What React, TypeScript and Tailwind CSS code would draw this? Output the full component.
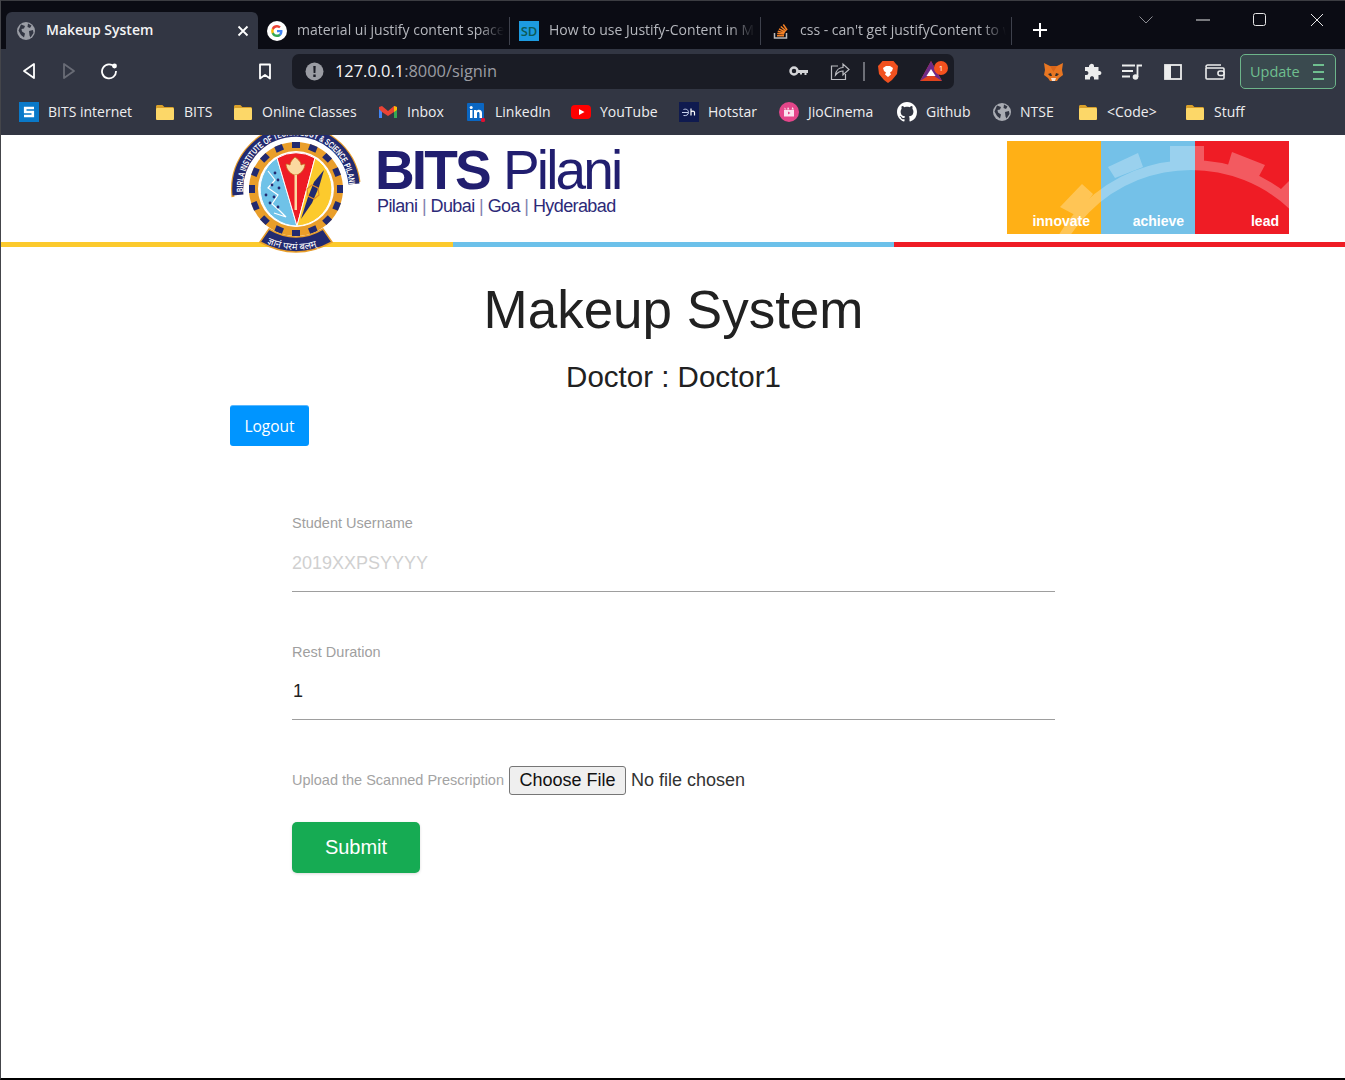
import React from "react";

const ui = "font-['Open_Sans','Noto_Sans',sans-serif]";

function Folder() {
  return (
    <svg width="20" height="20" viewBox="0 0 20 20" className="shrink-0">
      <path d="M1 4.500C1 3.700 1.600 3 2.400 3h5l2 2h8.200c.8 0 1.400.7 1.400 1.500v10c0 .8-.6 1.500-1.400 1.500H2.400C1.600 18 1 17.300 1 16.500z" fill="#d9a02a" />
      <path d="M1 7.500C1 6.700 1.600 6 2.400 6h15.200c.8 0 1.400.7 1.400 1.500v9c0 .8-.6 1.500-1.400 1.500H2.400C1.600 18 1 17.300 1 16.500z" fill="#fcd768" />
    </svg>
  );
}

function Globe({ size = 18, color = "#a9acb3", bg = "#323643" }: { size?: number; color?: string; bg?: string }) {
  return (
    <svg width={size} height={size} viewBox="0 0 18 18" className="shrink-0">
      <circle cx="9" cy="9" r="9" fill={color} />
      <path d="M4 2.500 8 4 7 6.500 4.500 7 5 9.500l3 2-1 4L4 13 1.500 8.500zM11 1.500l3.500 2L13 6l-2.500-1zM12 9l4-1 .5 3-3 4.500-1-2z" fill={bg} />
    </svg>
  );
}

const bookmarks: { label: string; w: string; icon: React.ReactNode }[] = [
  {
    label: "BITS internet",
    w: "w-[136px]",
    icon: (
      <svg width="20" height="20" viewBox="0 0 20 20" className="shrink-0">
        <rect width="20" height="20" fill="#0a79c9" />
        <path d="M15 6H6.200v4h7.600v4H5" fill="none" stroke="#fff" strokeWidth="2.600" />
      </svg>
    ),
  },
  { label: "BITS", w: "w-[78px]", icon: <Folder /> },
  { label: "Online Classes", w: "w-[145px]", icon: <Folder /> },
  {
    label: "Inbox",
    w: "w-[88px]",
    icon: (
      <svg width="20" height="20" viewBox="0 0 20 20" className="shrink-0">
        <path d="M1 5v11h3V8z" fill="#4285f4" />
        <path d="M19 5v11h-3V8z" fill="#34a853" />
        <path d="M1 5l3-1 6 5 6-5 3 1v2l-3 3-6 4-6-4-3-3z" fill="#ea4335" />
        <path d="M16 4l3 1v3l-3 2z" fill="#fbbc04" />
      </svg>
    ),
  },
  {
    label: "LinkedIn",
    w: "w-[105px]",
    icon: (
      <svg width="20" height="20" viewBox="0 0 20 20" className="shrink-0">
        <rect x="1" y="1" width="17" height="18" rx="1" fill="#0a66c2" />
        <rect x="4" y="8" width="2.500" height="8" fill="#fff" />
        <circle cx="5.200" cy="5.500" r="1.500" fill="#fff" />
        <path d="M8 8h2.500v1.200c.6-1 1.500-1.400 2.500-1.400 2 0 3 1.200 3 3.400V16h-2.500v-4.300c0-1-.4-1.600-1.300-1.600s-1.200.7-1.200 1.600V16H8z" fill="#fff" />
        <circle cx="17" cy="18" r="2.200" fill="#e0102f" />
      </svg>
    ),
  },
  {
    label: "YouTube",
    w: "w-[108px]",
    icon: (
      <svg width="20" height="20" viewBox="0 0 20 20" className="shrink-0">
        <rect y="3" width="20" height="14" rx="4" fill="#f00" />
        <path d="M8 7l5.500 3L8 13z" fill="#fff" />
      </svg>
    ),
  },
  {
    label: "Hotstar",
    w: "w-[100px]",
    icon: (
      <svg width="20" height="20" viewBox="0 0 20 20" className="shrink-0">
        <rect width="20" height="20" fill="#0f1a4f" />
        <path d="M3 10.500h6M4.500 7.500c3-1 5 .5 5 3s-2.500 3.500-5 3" stroke="#c8d2ee" strokeWidth="1" fill="none" />
        <path d="M12 6.500v7M12 10c.5-1 3.500-1.500 3.500.5v3" stroke="#fff" strokeWidth="1.200" fill="none" />
      </svg>
    ),
  },
  {
    label: "JioCinema",
    w: "w-[118px]",
    icon: (
      <svg width="20" height="20" viewBox="0 0 20 20" className="shrink-0">
        <circle cx="10" cy="10" r="10" fill="#e4468a" />
        <path d="M5 8h10v6.500H5z" fill="#fbe4ef" />
        <path d="M5.500 5.500l2 2h-2zM9 5l1.500 2.500H8zM13.500 5l1.500 2.500h-2.500z" fill="#fbe4ef" />
        <path d="M9 9.500l2.500 1.500L9 12.500z" fill="#e4468a" />
      </svg>
    ),
  },
  {
    label: "Github",
    w: "w-[96px]",
    icon: (
      <svg width="20" height="20" viewBox="0 0 16 16" className="shrink-0">
        <path fill="#fff" d="M8 0C3.580 0 0 3.580 0 8c0 3.540 2.290 6.530 5.470 7.590.4.070.55-.17.55-.38 0-.19-.01-.82-.01-1.490-2.010.37-2.530-.49-2.690-.94-.09-.23-.48-.94-.82-1.130-.28-.15-.68-.52-.01-.53.63-.01 1.080.58 1.230.82.720 1.210 1.870.87 2.330.66.070-.52.280-.87.510-1.070-1.780-.2-3.640-.89-3.640-3.950 0-.87.310-1.590.820-2.150-.08-.2-.36-1.020.08-2.120 0 0 .67-.21 2.200.82.640-.18 1.320-.27 2-.27s1.360.09 2 .27c1.530-1.040 2.200-.82 2.200-.82.440 1.100.16 1.920.08 2.120.51.560.82 1.270.82 2.150 0 3.070-1.870 3.750-3.650 3.950.29.250.54.730.54 1.480 0 1.070-.01 1.930-.01 2.200 0 .21.150.46.55.38A8.010 8.010 0 0 0 16 8c0-4.420-3.580-8-8-8z" />
      </svg>
    ),
  },
  { label: "NTSE", w: "w-[85px]", icon: <Globe /> },
  { label: "<Code>", w: "w-[107px]", icon: <Folder /> },
  { label: "Stuff", w: "w-[70px]", icon: <Folder /> },
];

function Tab({ icon, text, wide }: { icon: React.ReactNode; text: string; wide?: boolean }) {
  return (
    <div className={`${wide ? "w-[252px]" : "w-[251px]"} h-[37px] flex items-center pl-[9px]`}>
      <span className="w-[20px] h-[20px] shrink-0 flex items-center justify-center">{icon}</span>
      <span className="ml-[10px] mb-[2px] flex-1 overflow-hidden whitespace-nowrap text-[14px] text-[#b5b7bd] [mask-image:linear-gradient(to_right,black_88%,transparent)]">
        {text}
      </span>
      <span className="w-px h-[28px] bg-[#3e414c] ml-[5px] shrink-0" />
    </div>
  );
}

function Emblem() {
  const teeth = Array.from({ length: 16 }, (_, i) => (i * 360) / 16);
  return (
    <svg width="136" height="120" viewBox="0 0 136 120" className="absolute left-[227px] top-0 z-10">
      <defs>
        <path id="emblemArc" d="M15 57 A53 53 0 0 1 121 50" />
        <path id="ribbonArc" d="M38 108 Q68 122 98 108" />
      </defs>
      <path d="M5 62A63 63 0 0 1 131 47" fill="none" stroke="#e99e2a" strokeWidth="3" />
      <path d="M10 60A58 58 0 0 1 126 49" fill="none" stroke="#222a70" strokeWidth="11" />
      <circle cx="68" cy="54" r="47" fill="#e99e2a" />
      <g fill="#222a70">
        {teeth.map((a) => (
          <rect key={a} x="64" y="7" width="8" height="6" transform={`rotate(${a} 68 54)`} />
        ))}
      </g>
      <circle cx="68" cy="54" r="38" fill="#fff" />
      <path d="M49 23A37 37 0 0 0 69 91Z" fill="#6fc2e8" stroke="#fff" strokeWidth="1" />
      <path d="M49 23A37 37 0 0 1 87 23L69 91Z" fill="#ee1c25" stroke="#fff" strokeWidth="1" />
      <path d="M87 23A37 37 0 0 1 69 91Z" fill="#fcca2d" stroke="#fff" strokeWidth="1" />
      <path d="M67 22c-3 3-5 5-5 8-2-1-3-1-4-1 0 4 3 9 8 11h3c5-2 8-7 8-11-1 0-2 0-4 1 0-3-2-5-6-8z" fill="#fbd9a0" stroke="#c7631d" strokeWidth="0.800" />
      <rect x="66.500" y="40" width="2.500" height="35" fill="#fbd9a0" />
      <path d="M96 35 91 52 84 68 73 84 80 62 86 47z" fill="#222a70" />
      <path d="M84 50l6 3 1 7-5 4-6-3-1-7z" fill="none" stroke="#e08a2a" strokeWidth="1.200" />
      <path d="M40 36l7 9-7 8 10 7-6 9 8 7 6 6-12-4" stroke="#fff" strokeWidth="1.200" fill="none" />
      <g fill="#222a70">
        <circle cx="47" cy="38" r="1.400" /><circle cx="50" cy="45" r="1.400" /><circle cx="44" cy="50" r="1.400" /><circle cx="51" cy="53" r="1.400" /><circle cx="38" cy="60" r="1.400" /><circle cx="46" cy="62" r="1.400" /><circle cx="42" cy="68" r="1.400" /><circle cx="50" cy="72" r="1.400" />
      </g>
      <path d="M32 107 41 94Q68 110 95 94L104 107Q68 127 32 107z" fill="#222a70" stroke="#e99e2a" strokeWidth="1.500" />
      <text fontSize="9" fontWeight="700" fill="#fff" fontFamily="'Liberation Sans',sans-serif">
        <textPath href="#emblemArc" textLength="166" lengthAdjust="spacingAndGlyphs">BIRLA INSTITUTE OF TECHNOLOGY &amp; SCIENCE PILANI</textPath>
      </text>
      <text fontSize="9.500" fill="#fff" fontFamily="'Noto Sans',sans-serif">
        <textPath href="#ribbonArc" startOffset="1">ज्ञानं परमं बलम्</textPath>
      </text>
    </svg>
  );
}

function Banner() {
  return (
    <div className="relative w-[282px] h-[93px] flex overflow-hidden font-['Liberation_Sans',sans-serif] font-bold text-[14px] text-white">
      <div className="w-[94px] bg-[#ffb016] flex items-end justify-end pr-[11px] pb-[2px]">
        <span className="relative z-20">innovate</span>
      </div>
      <div className="w-[94px] bg-[#74c1e8] flex items-end justify-end pr-[11px] pb-[2px]">
        <span className="relative z-20">achieve</span>
      </div>
      <div className="flex-1 bg-[#ef1c25] flex items-end justify-end pr-[10px] pb-[2px]">
        <span className="relative z-20">lead</span>
      </div>
      <svg width="282" height="93" viewBox="0 0 282 93" className="absolute inset-0 z-10 pointer-events-none">
        <g opacity="0.27">
          <circle cx="184" cy="173" r="149" fill="none" stroke="#fff" strokeWidth="10" />
          <g fill="#fff">
            <path d="M53 66 75 43 86 53 70 75z" />
            <path d="M101 26 131 12 136 26 108 37z" />
            <path d="M163 5h34v16h-34z" />
            <path d="M225 11 258 24 251 37 221 24z" />
            <path d="M273 49 283 39V62z" />
          </g>
        </g>
      </svg>
    </div>
  );
}

export default function App() {
  return (
    <div className="w-[1345px] h-[1080px] overflow-hidden bg-white border-l border-l-[#44454a] border-b-2 border-b-black flex flex-col">
      {/* Browser chrome */}
      <div className={`${ui} bg-[#0b0c14] border-t border-[#3c3d42] h-[49px] shrink-0 flex items-end relative pl-[5px]`}>
        <div className="w-[252px] h-[37px] bg-[#323643] rounded-t-[6px] flex items-center pl-[11px] pr-[9px]">
          <Globe size={18} color="#9a9da5" />
          <span className="ml-[11px] mb-[2px] flex-1 text-[14px] font-semibold text-[#f4f4f5] whitespace-nowrap">Makeup System</span>
          <svg width="12" height="12" viewBox="0 0 12 12"><path d="M1.500 1.500l9 9m0-9-9 9" stroke="#fff" strokeWidth="1.800" /></svg>
        </div>
        <Tab
          wide
          text="material ui justify content space between"
          icon={
            <svg width="20" height="20" viewBox="0 0 20 20">
              <circle cx="10" cy="10" r="10" fill="#fff" />
              <path d="M15.500 10.200c0-.4 0-.8-.1-1.200H10v2.300h3.100a2.700 2.700 0 0 1-1.200 1.700v1.500h1.900c1.100-1 1.700-2.500 1.700-4.300z" fill="#4285f4" />
              <path d="M10 16c1.600 0 2.900-.5 3.800-1.500l-1.900-1.500c-.5.400-1.200.6-1.900.6-1.500 0-2.800-1-3.200-2.400h-2v1.500A5.700 5.700 0 0 0 10 16z" fill="#34a853" />
              <path d="M6.800 11.200a3.500 3.500 0 0 1 0-2.400V7.300h-2a5.900 5.900 0 0 0 0 5.400z" fill="#fbbc05" />
              <path d="M10 6.400c.8 0 1.600.3 2.200.9l1.600-1.700A5.600 5.600 0 0 0 10 4a5.700 5.700 0 0 0-5.200 3.300l2 1.500C7.200 7.400 8.500 6.400 10 6.400z" fill="#ea4335" />
            </svg>
          }
        />
        <Tab
          text="How to use Justify-Content in Material UI"
          icon={
            <span className="w-[20px] h-[20px] bg-[#1d9be0] text-[#0c5a56] text-[13px] leading-[20px] text-center font-semibold">SD</span>
          }
        />
        <Tab
          text="css - can't get justifyContent to work in MUI"
          icon={
            <svg width="20" height="20" viewBox="0 0 20 20">
              <path d="M3.500 12v5h12v-5" stroke="#bcbbbb" strokeWidth="1.500" fill="none" transform="translate(1 0)" />
              <path d="M7 14.800h7M7.200 12.500l7 .6M7.800 10.200l6.800 1.800M9 7.800l6.200 3.200M10.800 5.500l5.300 4.500M13.300 3.500l3.800 5.500" stroke="#f48024" strokeWidth="1.500" fill="none" />
            </svg>
          }
        />
        <svg width="16" height="16" viewBox="0 0 16 16" className="ml-[20px] mb-[11px]"><path d="M8 1v14M1 8h14" stroke="#fff" strokeWidth="2" /></svg>
        <div className="absolute right-0 top-0 h-[37px] flex items-center">
          <svg width="16" height="10" viewBox="0 0 16 10" className="mr-[42px]"><path d="M1.500 1.500 8 8l6.500-6.500" stroke="#8b8c92" fill="none" /></svg>
          <svg width="14" height="14" viewBox="0 0 14 14" className="mr-[43px]"><path d="M0 7h14" stroke="#e6e6e6" /></svg>
          <svg width="14" height="14" viewBox="0 0 14 14" className="mr-[43px]"><rect x=".5" y=".5" width="12" height="12" rx="2" stroke="#e6e6e6" fill="none" /></svg>
          <svg width="14" height="14" viewBox="0 0 14 14" className="mr-[21px]"><path d="M1 1l12 12M13 1 1 13" stroke="#e6e6e6" /></svg>
        </div>
      </div>

      <div className={`${ui} bg-[#323643] h-[43px] shrink-0 flex items-center relative pl-[20px] pt-[1px]`}>
        <svg width="16" height="18" viewBox="0 0 16 18" className="mr-[24px]"><path d="M13 2v14L3 9z" stroke="#fff" strokeWidth="1.800" fill="none" strokeLinejoin="round" /></svg>
        <svg width="16" height="18" viewBox="0 0 16 18" className="mr-[23px]"><path d="M3 2v14l10-7z" stroke="#696c76" strokeWidth="1.800" fill="none" strokeLinejoin="round" /></svg>
        <svg width="18" height="18" viewBox="0 0 18 18" className="mr-[140px]">
          <path d="M14.600 5.200A7 7 0 1 0 16 9" stroke="#fff" strokeWidth="1.800" fill="none" />
          <circle cx="14.500" cy="4" r="2.400" fill="#fff" />
        </svg>
        <svg width="14" height="17" viewBox="0 0 14 17" className="mr-[20px]"><path d="M2 1.500h10v14l-5-3.500-5 3.500z" stroke="#fff" strokeWidth="1.800" fill="none" strokeLinejoin="round" /></svg>
        <div className="w-[662px] h-[35px] bg-[#1a1c25] rounded-[7px] flex items-center pl-[13px]">
          <svg width="19" height="19" viewBox="0 0 19 19"><circle cx="9.500" cy="9.500" r="9" fill="#9a9ca3" /><path d="M8.300 4h2.400l-.3 7H8.600zM8.300 12.500h2.400V15H8.300z" fill="#1a1c25" /></svg>
          <span className="ml-[11px] text-[16.400px] text-[#f4f4f5] whitespace-nowrap">127.0.0.1<span className="text-[#9a9ca3]">:8000/signin</span></span>
          <div className="ml-auto flex items-center">
            <svg width="20" height="12" viewBox="0 0 20 12" className="mr-[21px]"><circle cx="5" cy="6" r="3.500" stroke="#d4d5d8" strokeWidth="2.500" fill="none" /><path d="M9 5h10v3h-1.500v2h-2V8H13v1.500h-2V8H9z" fill="#d4d5d8" /></svg>
            <svg width="20" height="19" viewBox="0 0 20 19" className="mr-[13px]"><path d="M8 4H1.500v13.500h14V12" stroke="#bcbdc2" strokeWidth="1.200" fill="none" /><path d="M5.500 13c.5-5 4-7.500 7.500-7.500V2l6 5.500-6 5.500V9c-3 0-5 1-7.500 4z" stroke="#bcbdc2" strokeWidth="1.200" fill="none" /></svg>
            <span className="w-[2px] h-[19px] bg-[#6d6f77] mr-[13px]" />
            <svg width="20" height="23" viewBox="0 0 20 23" className="mr-[22px]">
              <path d="M4.500 1h11L18 4l2 2-1 8-5 6-4 3-4-3-5-6-1-8 2-2z" fill="#f1511f" />
              <path d="M5 8l3-2h4l3 2-1 3-2 1.500 1 2-3 2.500-3-2.500 1-2L6 11z" fill="#fff" />
            </svg>
            <span className="relative w-[22px] h-[20px] mr-[12px]">
              <svg width="22" height="20" viewBox="0 0 24 20" preserveAspectRatio="none"><path d="M12 0 24 20H0z" fill="#e0431f" /><path d="M12 0 24 20 12 13 0 20z" fill="#6f2a86" /><path d="M12 8l5 7H7z" fill="#fff" /></svg>
              <span className="absolute right-[-6px] top-0 w-[14px] h-[14px] rounded-full bg-[#f4511e] text-white text-[8px] leading-[14px] text-center">1</span>
            </span>
          </div>
        </div>
        <div className="absolute left-[1042px] top-[1px] h-full flex items-center">
          <svg width="21" height="20" viewBox="0 0 21 20" className="mr-[20px]">
            <path d="M1 1l6 3h7l6-3-1 7 1 5-4 3-2 3H7l-2-3-4-3 1-5z" fill="#e87622" />
            <path d="M5 12l3-1 1 3H7zM16 12l-3-1-1 3h2z" fill="#33302e" />
            <path d="M8 16h5l-1 3H9z" fill="#f4e0d0" />
            <path d="M7 4h7l-3.500 6z" fill="#d9651a" />
          </svg>
          <svg width="18" height="18" viewBox="0 0 18 18" className="mr-[20px]"><path d="M6 1.500c1.500-1.500 4-.5 4 1.500v1h4.500v4h1c2.500 0 2.500 4 0 4h-1v4.500H10V15c0-2.500-4-2.500-4 0v1.500H1V12h1.500c2.500 0 2.500-4 0-4H1V4h4V3c0-.6.4-1.100 1-1.500z" fill="#eceded" /></svg>
          <svg width="20" height="16" viewBox="0 0 20 16" className="mr-[22px]"><path d="M0 1.500h13M0 7h11M0 12.500h8" stroke="#eceded" strokeWidth="1.800" /><path d="M15.500 13V1.500H20" stroke="#eceded" strokeWidth="1.800" fill="none" /><circle cx="13.500" cy="13" r="2.800" fill="#eceded" /></svg>
          <svg width="18" height="16" viewBox="0 0 18 16" className="mr-[23px]"><rect x="1" y="1" width="16" height="14" stroke="#eceded" strokeWidth="1.800" fill="none" /><rect x="1" y="1" width="6" height="14" fill="#eceded" /></svg>
          <svg width="20" height="16" viewBox="0 0 20 16" className="mr-[15px]"><path d="M1 4v10c0 .6.5 1 1 1h16c.6 0 1-.4 1-1V5c0-.6-.4-1-1-1H2c-.6 0-1-.5-1-1.300S1.500 1 2.500 1H16" stroke="#eceded" strokeWidth="1.600" fill="none" /><rect x="13" y="7" width="6" height="4.500" rx="2" stroke="#eceded" strokeWidth="1.600" fill="#323643" /></svg>
          <div className="w-[96px] h-[35px] border border-[#6db58a] rounded-[5px] bg-[#3a4a4f] flex items-center pl-[9px] pr-[11px] text-[14.500px] text-[#6fbf8f]">
            <span>Update</span>
            <span className="ml-auto flex flex-col gap-[5px]">
              <span className="block w-[11px] h-[2px] bg-[#6fbf8f]" />
              <span className="block w-[11px] h-[2px] bg-[#6fbf8f]" />
              <span className="block w-[11px] h-[2px] bg-[#6fbf8f]" />
            </span>
          </div>
        </div>
      </div>

      <div className={`${ui} bg-[#323643] h-[43px] shrink-0 flex items-center pl-[18px] pb-[4px] text-[14px] text-[#eeeef0]`}>
        {bookmarks.map((b) => (
          <div key={b.label} className={`${b.w} shrink-0 flex items-center gap-[9px] whitespace-nowrap`}>
            {b.icon}
            <span>{b.label}</span>
          </div>
        ))}
      </div>

      {/* Site header */}
      <div className="relative h-[112px] shrink-0 font-['Liberation_Sans',sans-serif]">
        <Emblem />
        <div className="h-[107px] flex items-start">
          <div className="ml-[374px] mt-[11px] text-[#211e6f]">
            <div className="text-[55px] leading-[49px] tracking-[-2.900px] whitespace-nowrap h-[49px] [word-spacing:2px]">
              <span className="font-bold">BITS</span> <span>Pilani</span>
            </div>
            <div className="text-[18px] leading-[22px] tracking-[-0.600px] whitespace-nowrap text-[#2d2a78]">
              <span className="pl-[2px]">Pilani</span>
              <span className="mx-[4.500px] text-[#8583b0]">|</span>Dubai<span className="mx-[4.500px] text-[#8583b0]">|</span>Goa<span className="mx-[4.500px] text-[#8583b0]">|</span>Hyderabad
            </div>
          </div>
          <div className="ml-auto mr-[56px] mt-[6px]">
            <Banner />
          </div>
        </div>
        <div className="flex h-[5px]">
          <div className="w-[452px] bg-[#fcca2d]" />
          <div className="w-[441px] bg-[#6cc1ea]" />
          <div className="flex-1 bg-[#ef1c25]" />
        </div>
      </div>

      {/* Page */}
      <div className="w-[887px] ml-[229px] font-['Liberation_Sans',sans-serif] text-[#212121]">
        <h1 className="text-[53px] leading-[62px] text-center mt-[32px]">Makeup System</h1>
        <h2 className="text-[29.500px] leading-[38px] text-center mt-[17px]">Doctor : Doctor1</h2>
        <button className="mt-[9px] pt-[2px] w-[79px] h-[41px] bg-[#0095ff] border-t border-[#5ab8ff] text-white rounded-[3px] text-[15.500px] font-['Open_Sans',sans-serif] block">
          Logout
        </button>
        <form className="mt-[68px] ml-[62px] w-[763px]">
          <label className="block text-[14.500px] leading-[18px] text-[#9f9f9f]">Student Username</label>
          <input
            placeholder="2019XXPSYYYY"
            className="block w-full h-[54px] mt-[6px] pb-[2px] text-[18px] border-b border-[#9e9e9e] outline-none placeholder:text-[#d0d0d0]"
          />
          <label className="block mt-[51px] text-[14.500px] leading-[18px] text-[#9f9f9f]">Rest Duration</label>
          <input
            defaultValue="1"
            className="block w-full h-[53px] mt-[6px] pb-[3px] pl-[1px] text-[18px] border-b border-[#9e9e9e] outline-none text-[#212121]"
          />
          <div className="mt-[46px] flex items-center h-[29px]">
            <label className="text-[14.500px] text-[#a3a3a3] whitespace-nowrap mr-[5px]">Upload the Scanned Prescription</label>
            <input
              type="file"
              className="text-[18px] text-[#333333] file:h-[29px] file:w-[117px] file:mr-[5px] file:bg-[#efefef] file:border file:border-[#767676] file:rounded-[3px] file:text-[#111111]"
            />
          </div>
          <button type="button" className="block mt-[27px] pb-[2px] w-[128px] h-[51px] bg-[#16ab53] rounded-[5px] text-white text-[20px] shadow-[0_1px_3px_rgba(0,0,0,0.15)]">
            Submit
          </button>
        </form>
      </div>
    </div>
  );
}
